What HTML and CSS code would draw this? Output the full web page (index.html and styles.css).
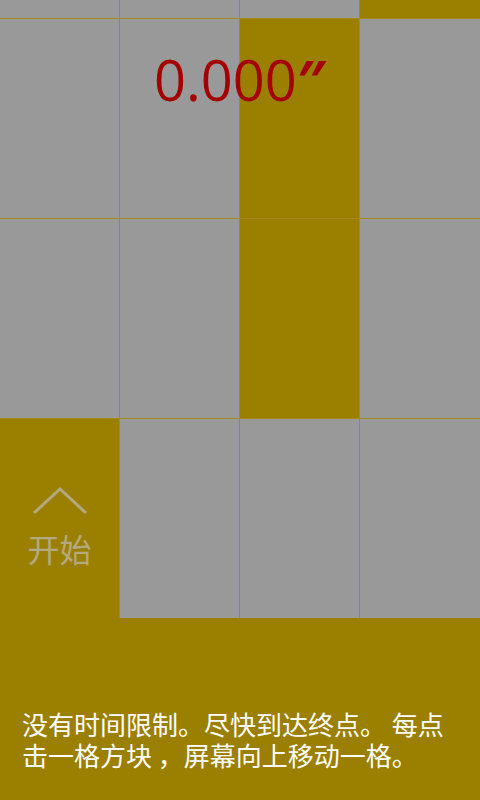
FILE: index.html
```html
<!DOCTYPE html>
<html>
<head>
<meta charset="utf-8">
<link rel="stylesheet" href="styles.css">
</head>
<body>
<div class="screen">
  <div class="board">
    <div class="tile"></div><div class="tile"></div><div class="tile"></div><div class="tile dark"></div>
    <div class="tile"></div><div class="tile"></div><div class="tile dark"></div><div class="tile"></div>
    <div class="tile"></div><div class="tile"></div><div class="tile dark"></div><div class="tile"></div>
    <div class="tile dark start">
      <svg class="chev" width="60" height="32" viewBox="0 0 60 32"><polyline points="4,28 30,4 56,28" fill="none" stroke="#b4a97e" stroke-width="3"/></svg>
      <span class="start-label">开始</span>
    </div>
    <div class="tile"></div><div class="tile"></div><div class="tile"></div>
    <div class="timer">0.000<span class="sec">″</span></div>
  </div>
  <div class="info">
    <p class="hint">没有时间限制。尽快到达终点。 每点击一格方块 ，屏幕向上移动一格。</p>
  </div>
</div>
</body>
</html>
```
FILE: styles.css
```css
html, body {
  margin: 0;
  padding: 0;
  background: #9b8000;
}
.screen {
  width: 480px;
  height: 800px;
  overflow: hidden;
  display: flex;
  flex-direction: column;
  background: #9b8000;
}
.board {
  position: relative;
  display: grid;
  grid-template-columns: 119px 119px 119px 120px;
  grid-template-rows: 18px 199px 199px 199px;
  gap: 1px;
  background: #a48a1e;
}
.tile {
  background: #999999;
}
.tile.dark {
  background: #9b8000;
}
.start {
  display: flex;
  flex-direction: column;
  align-items: center;
  padding-top: 66px;
  box-sizing: border-box;
}
.chev {
  display: block;
  margin-left: 1px;
}
.start-label {
  font-family: "Noto Sans CJK SC", sans-serif;
  font-size: 32px;
  line-height: 40px;
  color: #b4a97e;
  margin-top: 11px;
}
.timer {
  position: absolute;
  top: 51px;
  left: 0;
  right: 0;
  text-align: center;
  font-family: "Open Sans", Roboto, sans-serif;
  font-size: 56px;
  line-height: 1;
  color: #a30000;
}
.sec {
  font-weight: 700;
}
.info {
  flex: 1;
  padding: 90px 22px 0 22px;
}
.hint {
  margin: 0;
  font-family: "Noto Sans CJK SC", sans-serif;
  font-size: 26px;
  line-height: 31px;
  color: #ffffff;
}
```
